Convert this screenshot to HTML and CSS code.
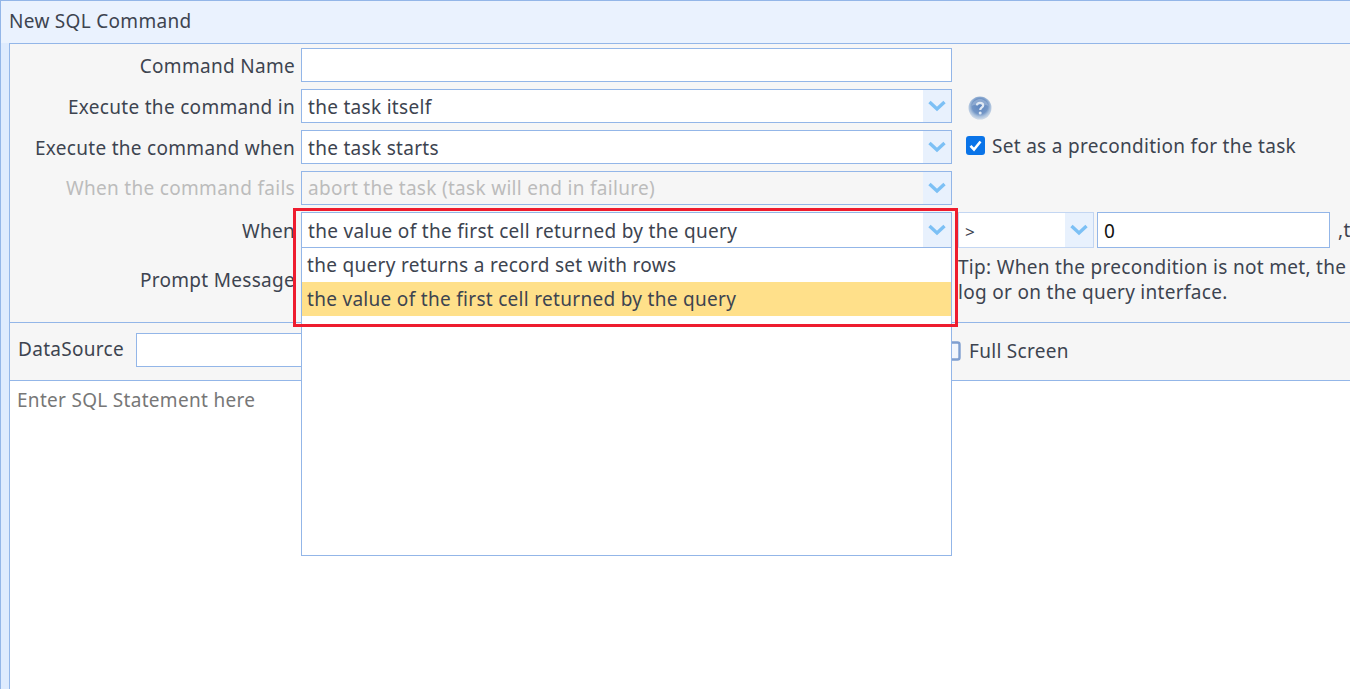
FILE: index.html
```html
<!DOCTYPE html>
<html lang="en">
<head>
<meta charset="utf-8">
<title>New SQL Command</title>
<link rel="stylesheet" href="styles.css">
</head>
<body>
<div class="panel">
  <div class="panel-title">New SQL Command</div>
  <div class="panel-body">
    <div class="form">
      <div class="row">
        <label class="label">Command Name</label>
        <div class="field"></div>
      </div>
      <div class="row">
        <label class="label">Execute the command in</label>
        <div class="field combo"><span class="value">the task itself</span><span class="arrow"><svg width="20" height="12" viewBox="0 0 20 12"><path d="M2.5 2 L10 9 L17.5 2" fill="none" stroke="#7cc0f5" stroke-width="3.4"/></svg></span></div>
        <svg class="help" width="24" height="24" viewBox="0 0 24 24">
          <defs><radialGradient id="hg" cx="50%" cy="42%" r="55%"><stop offset="0" stop-color="#5e86c0"/><stop offset="0.62" stop-color="#7396c6"/><stop offset="0.82" stop-color="#a9c0dc"/><stop offset="1" stop-color="#c9d6e6"/></radialGradient></defs>
          <circle cx="12" cy="12" r="11.5" fill="url(#hg)"/>
          <path d="M3.5 10 C5 5 9 3 12 3 C15 3 19 5 20.5 10 C17 7.5 7 7.5 3.5 10 Z" fill="#fff" opacity="0.22"/>
          <path d="M8.8 9.4 C9 7.6 10.3 6.8 12 6.8 C13.9 6.8 15.2 7.8 15.2 9.4 C15.2 11.4 12.2 11.6 12.2 14" fill="none" stroke="#dfe8f3" stroke-width="2.2"/>
          <circle cx="12.2" cy="17" r="1.5" fill="#dfe8f3"/>
        </svg>
      </div>
      <div class="row">
        <label class="label">Execute the command when</label>
        <div class="field combo"><span class="value">the task starts</span><span class="arrow"><svg width="20" height="12" viewBox="0 0 20 12"><path d="M2.5 2 L10 9 L17.5 2" fill="none" stroke="#7cc0f5" stroke-width="3.4"/></svg></span></div>
        <span class="check-wrap">
          <svg class="check" width="19" height="19" viewBox="0 0 19 19"><rect width="19" height="19" rx="3" fill="#0a74e8"/><path d="M4.5 9.8 L8 13.5 L14.5 5.5" fill="none" stroke="#fff" stroke-width="2.6"/></svg>
          <span>Set as a precondition for the task</span>
        </span>
      </div>
      <div class="row disabled">
        <label class="label">When the command fails</label>
        <div class="field combo"><span class="value">abort the task (task will end in failure)</span><span class="arrow"><svg width="20" height="12" viewBox="0 0 20 12"><path d="M2.5 2 L10 9 L17.5 2" fill="none" stroke="#7cc0f5" stroke-width="3.4"/></svg></span></div>
      </div>
      <div class="row row-when">
        <label class="label">When</label>
        <div class="field combo when-combo">
          <span class="value">the value of the first cell returned by the query</span><span class="arrow"><svg width="20" height="12" viewBox="0 0 20 12"><path d="M2.5 2 L10 9 L17.5 2" fill="none" stroke="#7cc0f5" stroke-width="3.4"/></svg></span>
          <div class="dropdown">
            <div class="option">the query returns a record set with rows</div>
            <div class="option selected">the value of the first cell returned by the query</div>
          </div>
        </div>
        <div class="field combo op-combo"><span class="value op">&gt;</span><span class="arrow"><svg width="20" height="12" viewBox="0 0 20 12"><path d="M2.5 2 L10 9 L17.5 2" fill="none" stroke="#7cc0f5" stroke-width="3.4"/></svg></span></div>
        <div class="field num-input"><span class="value num">0</span></div>
        <span class="after">,t</span>
      </div>
      <div class="row row-prompt">
        <label class="label">Prompt Message</label>
        <div class="field prompt-box"></div>
        <div class="tip">Tip: When the precondition is not met, the<br>log or on the query interface.</div>
      </div>
    </div>
    <div class="toolbar">
      <span class="ds-label">DataSource</span>
      <div class="field ds-input"></div>
      <span class="fullscreen">
        <svg width="16" height="20" viewBox="0 0 16 20"><rect x="1.5" y="1.5" width="13" height="17" rx="2" fill="#f2f6fc" stroke="#7f9fd0" stroke-width="2.4"/></svg>
        <span>Full Screen</span>
      </span>
    </div>
    <div class="editor">Enter SQL Statement here</div>
  </div>
</div>
<div class="callout"></div>
</body>
</html>
```

FILE: styles.css
```css
* { box-sizing: border-box; }
html, body { margin: 0; height: 689px; overflow: hidden; }
body {
  position: relative;
  font-family: "Noto Sans", "Open Sans", sans-serif;
  font-size: 19px;
  letter-spacing: 0.3px;
  color: #3d4450;
  background: #fff;
}
.panel {
  height: 689px;
  width: 1350px;
  overflow: hidden;
  background: #deebfe;
  border: 1px solid #93b6e8;
  border-right: 0;
  border-bottom: 0;
  padding: 0 0 0 8px;
  display: flex;
  flex-direction: column;
}
.panel-title {
  height: 42px;
  line-height: 41px;
  background: #eaf2fe;
  margin-left: -8px;
  padding-left: 8px;
  flex: none;
}
.panel-body {
  flex: 1;
  min-height: 0;
  border: 1px solid #93b6e8;
  border-right: 0;
  border-bottom: 0;
  background: #fff;
  display: flex;
  flex-direction: column;
}
.form {
  height: 278px;
  background: #f6f6f6;
  padding-top: 4px;
  display: flex;
  flex-direction: column;
  gap: 7px;
  flex: none;
}
.row { display: flex; align-items: center; height: 34px; }
.label { width: 285px; padding-top: 2px; text-align: right; flex: none; white-space: nowrap; }
.field {
  width: 651px;
  height: 34px;
  margin-left: 6px;
  background: #fff;
  border: 1px solid #93b6e8;
  display: flex;
  flex: none;
  align-items: center;
  position: relative;
}
.value { flex: 1; padding: 2px 0 0 6px; white-space: nowrap; line-height: 32px; }
.arrow {
  width: 28px;
  height: 100%;
  background: #e8f1fd;
  display: flex;
  align-items: center;
  justify-content: center;
  flex: none;
}
.help { margin-left: 16px; margin-top: 3px; flex: none; }
.check-wrap { display: flex; align-items: center; gap: 7px; margin-left: 14px; margin-top: -3px; white-space: nowrap; }
.disabled .label, .disabled .value { color: #bcbcbc; padding-top: 0; }
.disabled .field { background: #f6f6f6; }
.disabled .arrow { background: #e8f1fd; }
.row-when { height: 36px; }
.when-combo { height: 36px; }
.op-combo { width: 136px; margin-left: 6px; height: 36px; border-color: #c3d6f2; }
.op { font-size: 17px; padding-top: 3px; }
.num-input { width: 233px; margin-left: 3px; height: 36px; }
.num { color: #111; }
.after { margin-left: 8px; white-space: nowrap; }
.row-prompt { height: 52px; margin-top: -1px; }
.row-prompt .label { padding-top: 0; }
.prompt-box { height: 52px; }
.tip { margin-left: 6px; line-height: 25px; white-space: nowrap; }
.dropdown {
  position: absolute;
  left: -1px;
  top: 34px;
  width: 651px;
  height: 309px;
  background: #fff;
  border: 1px solid #93b6e8;
  z-index: 2;
}
.option { height: 34px; line-height: 34px; padding-left: 5px; white-space: nowrap; }
.option.selected { background: #ffe08a; }
.toolbar {
  height: 59px;
  background: #f6f6f6;
  border-top: 1px solid #93b6e8;
  border-bottom: 1px solid #93b6e8;
  display: flex;
  align-items: center;
  padding-left: 8px;
  padding-bottom: 4px;
  flex: none;
}
.ds-label { width: 118px; flex: none; margin-top: -1px; }
.ds-input { margin-left: 0; width: 800px; }
.fullscreen { display: flex; align-items: center; gap: 8px; margin-left: 9px; white-space: nowrap; margin-top: 2px; }
.editor { padding: 6px 7px; color: #777; flex: 1; min-height: 0; background: #fff; }
.callout {
  position: absolute;
  left: 293px;
  top: 208px;
  width: 665px;
  height: 119px;
  border: 3px solid #ee1c2e;
  z-index: 5;
}
```
